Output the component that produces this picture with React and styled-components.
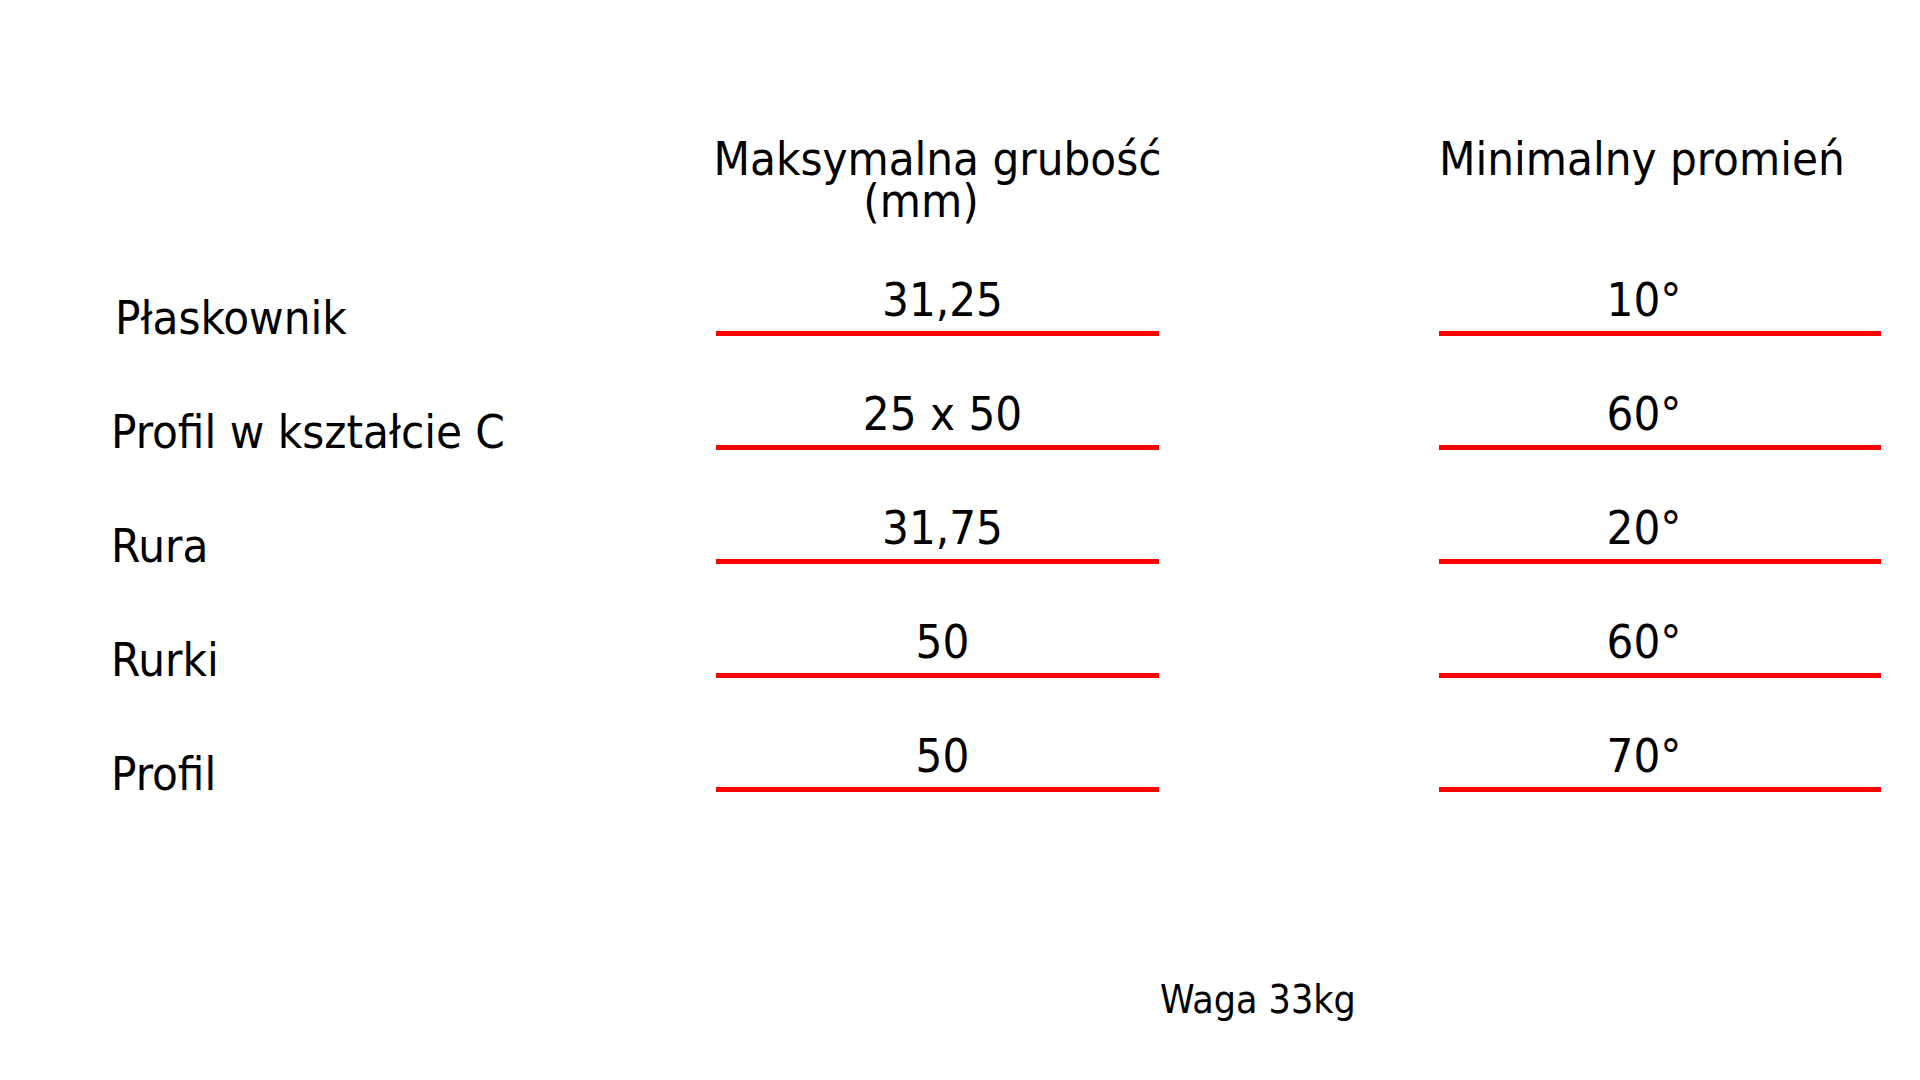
import React from "react";
import styled, { createGlobalStyle } from "styled-components";

const rows = [
  { label: "Płaskownik", indent: 4, thickness: "31,25", radius: "10°" },
  { label: "Profil w kształcie C", thickness: "25 x 50", radius: "60°" },
  { label: "Rura", thickness: "31,75", radius: "20°" },
  { label: "Rurki", thickness: "50", radius: "60°" },
  { label: "Profil", thickness: "50", radius: "70°" },
];

const App = () => (
  <>
    <GlobalStyle />
    <Page>
      <HeaderGrid>
        <span />
        <HeaderCell align="center">
          Maksymalna grubość
          <br />
          <Unit>(mm)</Unit>
        </HeaderCell>
        <span />
        <HeaderCell align="left">Minimalny promień</HeaderCell>
      </HeaderGrid>
      <BodyGrid>
        {rows.map((row) => (
          <React.Fragment key={row.label + row.radius}>
            <Label indent={row.indent}>{row.label}</Label>
            <Value shiftLeft={10}>{row.thickness}</Value>
            <span />
            <Value shiftRight={32}>{row.radius}</Value>
          </React.Fragment>
        ))}
      </BodyGrid>
      <Footer>Waga 33kg</Footer>
    </Page>
  </>
);

const GlobalStyle = createGlobalStyle`
  html, body {
    margin: 0;
    padding: 0;
    background: #ffffff;
  }
  body {
    font-family: "DejaVu Sans Condensed", "DejaVu Sans", sans-serif;
    font-stretch: condensed;
    color: #000000;
  }
`;

const Page = styled.div`
  width: 1920px;
  height: 1080px;
  padding-top: 138px;
  box-sizing: border-box;
  overflow: hidden;
`;

const columns = `
  display: grid;
  grid-template-columns: 716px 443px 280px 442px;
`;

const HeaderGrid = styled.div`
  ${columns}
`;

const HeaderCell = styled.div`
  text-align: ${(p) => p.align};
  font-size: 47px;
  line-height: 42px;
  white-space: nowrap;
  ${(p) => p.align === "center" && "margin: 0 -20px;"}
`;

const Unit = styled.span`
  padding-right: 33px;
`;

const BodyGrid = styled.div`
  ${columns}
  grid-auto-rows: 114px;
  align-items: end;
`;

const Label = styled.div`
  padding-left: ${(p) => 111 + (p.indent || 0)}px;
  font-size: 47px;
  line-height: 37px;
  white-space: nowrap;
`;

const Value = styled.div`
  font-size: 47px;
  line-height: 55px;
  text-align: center;
  padding-bottom: 4px;
  padding-left: ${(p) => p.shiftLeft || 0}px;
  padding-right: ${(p) => p.shiftRight || 0}px;
  border-bottom: 5px solid #f00;
  white-space: nowrap;
`;

const Footer = styled.div`
  margin-top: 185px;
  padding-left: 1160px;
  font-size: 39px;
  line-height: normal;
`;

export default App;
